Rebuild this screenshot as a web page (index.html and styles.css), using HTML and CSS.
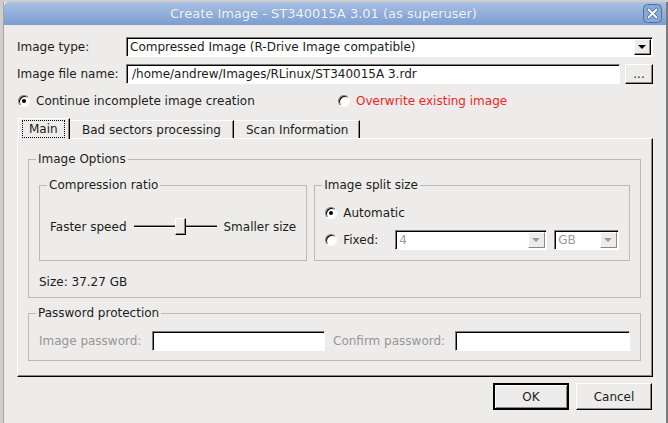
FILE: index.html
```html
<!DOCTYPE html>
<html lang="en">
<head>
    <meta charset="UTF-8">
    <title>Create Image</title>
    <link rel="stylesheet" href="styles.css">
</head>
<body>
<div class="desk">
    <div class="window">
        <!-- Title bar -->
        <div class="titlebar">
            <span class="title">Create Image - ST340015A 3.01 (as superuser)</span>
            <span class="close">
                <svg width="19" height="19" viewBox="0 0 19 19">
                    <rect x="0.5" y="0.5" width="18" height="18" rx="4" fill="#8aa9d8" stroke="#4f6f9f"/>
                    <path d="M5.5 5.5 L13.5 13.5 M13.5 5.5 L5.5 13.5" stroke="#4f6f9f" stroke-width="3.6" stroke-linecap="round"/>
                    <path d="M5.5 5.5 L13.5 13.5 M13.5 5.5 L5.5 13.5" stroke="#ffffff" stroke-width="1.8" stroke-linecap="round"/>
                </svg>
            </span>
        </div>

        <div class="content">
            <div class="form-row">
                <label class="row-label">Image type:</label>
                <div class="combo type-combo">
                    <span class="combo-text">Compressed Image (R-Drive Image compatible)</span>
                    <span class="drop"><i class="arrow"></i></span>
                </div>
            </div>

            <div class="form-row second">
                <label class="row-label">Image file name:</label>
                <div class="edit path">/home/andrew/Images/RLinux/ST340015A 3.rdr</div>
                <div class="btn browse">...</div>
            </div>

            <div class="radio-row">
                <span class="radio checked"></span>
                <span class="radio-text continue">Continue incomplete image creation</span>
                <span class="radio"></span>
                <span class="radio-text red">Overwrite existing image</span>
            </div>

            <!-- Tabs -->
            <div class="tabs">
                <div class="tab active"><span class="focus">Main</span></div>
                <div class="tab">Bad sectors processing</div>
                <div class="tab last">Scan Information</div>
            </div>

            <div class="panel">
                <fieldset class="group options">
                    <legend>Image Options</legend>
                    <div class="group-row">
                        <fieldset class="group compression">
                            <legend>Compression ratio</legend>
                            <div class="group-body slider-row">
                                <span>Faster speed</span>
                                <div class="slider"><span class="groove"></span><span class="handle"></span></div>
                                <span>Smaller size</span>
                            </div>
                        </fieldset>
                        <fieldset class="group split">
                            <legend>Image split size</legend>
                            <div class="group-body split-body">
                                <div class="split-line">
                                    <span class="radio checked"></span>
                                    <span class="radio-text">Automatic</span>
                                </div>
                                <div class="split-line fixed">
                                    <span class="radio"></span>
                                    <span class="radio-text fixed-text">Fixed:</span>
                                    <div class="combo disabled size-combo">
                                        <span class="combo-text">4</span>
                                        <span class="drop"><i class="arrow"></i></span>
                                    </div>
                                    <div class="combo disabled unit-combo">
                                        <span class="combo-text">GB</span>
                                        <span class="drop"><i class="arrow"></i></span>
                                    </div>
                                </div>
                            </div>
                        </fieldset>
                    </div>
                    <div class="size-text">Size: 37.27 GB</div>
                </fieldset>

                <fieldset class="group password">
                    <legend>Password protection</legend>
                    <div class="pw-row">
                        <span class="pw-label first">Image password:</span>
                        <div class="edit pw-edit first-edit"></div>
                        <span class="pw-label second">Confirm password:</span>
                        <div class="edit pw-edit second-edit"></div>
                    </div>
                </fieldset>
            </div>

            <div class="buttons">
                <div class="btn push default">OK</div>
                <div class="btn push">Cancel</div>
            </div>
        </div>
    </div>
</div>
</body>
</html>
```

FILE: styles.css
```css
* {
    box-sizing: border-box;
}
html {
    background: #cfcecc;
}
body {
    margin: 0;
    font-family: "DejaVu Sans", "Liberation Sans", sans-serif;
    font-size: 12px;
    color: #1c1c1c;
    white-space: nowrap;
}
.desk {
    height: 423px;
    padding: 2px 0 0 3px;
    overflow: hidden;
}
.window {
    width: 665px;
    height: 440px;
    background-color: #edecea;
    border-left: 1px solid #a4a4a4;
    border-right: 2px solid #7b7b7b;
}

/* title bar */
.titlebar {
    height: 23px;
    display: flex;
    align-items: center;
    background: linear-gradient(#a9c1e4, #7c9dd0);
    border-top-left-radius: 5px;
}
.title {
    flex: 1;
    text-align: center;
    color: #f3f6fb;
    font-size: 13px;
    text-shadow: 0 0 1px #6f8fc0;
}
.close {
    width: 19px;
    height: 19px;
    margin-right: 4px;
    display: flex;
}

.content {
    padding: 12px 13px 0 13px;
}

/* form rows */
.form-row {
    display: flex;
    align-items: center;
    height: 20px;
}
.form-row.second {
    margin-top: 7px;
}
.row-label {
    width: 109px;
}
.combo {
    display: flex;
    align-items: center;
    height: 20px;
    background: #fff;
    border: 1px solid;
    border-color: #7d7d7d #fff #fff #7d7d7d;
    box-shadow: inset 1px 1px 0 #000;
    padding: 0 1px 0 3px;
}
.type-combo {
    width: 527px;
}
.combo-text {
    flex: 1;
}
.drop {
    width: 17px;
    height: 16px;
    background: #edecea;
    border: 1px solid;
    border-color: #fff #000 #000 #fff;
    box-shadow: inset -1px -1px 0 #8a8a8a;
    display: flex;
    align-items: center;
    justify-content: center;
}
.arrow {
    width: 0;
    height: 0;
    border-left: 4px solid transparent;
    border-right: 4px solid transparent;
    border-top: 4px solid #000;
    margin-left: -1px;
}
.combo.disabled {
    color: #9a9a9a;
}
.combo.disabled .arrow {
    border-top-color: #9a9a9a;
}
.combo.disabled .drop {
    border-color: #fff #8a8a8a #8a8a8a #fff;
    box-shadow: none;
}
.edit {
    height: 20px;
    background: #fff;
    border: 1px solid;
    border-color: #7d7d7d #fff #fff #7d7d7d;
    box-shadow: inset 1px 1px 0 #000;
    padding: 2px 5px;
}
.path {
    width: 494px;
}
.btn {
    background: #edecea;
    border: 1px solid;
    border-color: #fff #000 #000 #fff;
    box-shadow: inset -1px -1px 0 #8a8a8a;
    display: flex;
    align-items: center;
    justify-content: center;
}
.browse {
    width: 28px;
    height: 20px;
    margin-left: 5px;
}

/* radios */
.radio-row {
    display: flex;
    align-items: center;
    height: 16px;
    margin-top: 9px;
    padding-left: 1px;
}
.radio {
    width: 12px;
    height: 12px;
    border-radius: 50%;
    border: 1px solid;
    border-color: #7d7d7d #fff #fff #7d7d7d;
    background: #fff;
    box-shadow: inset 1px 1px 0 #000;
    display: flex;
    align-items: center;
    justify-content: center;
    flex-shrink: 0;
}
.radio.checked::after {
    content: "";
    width: 4px;
    height: 4px;
    border-radius: 50%;
    background: #000;
}
.radio-text {
    margin-left: 6px;
}
.continue {
    width: 302px;
}
.red {
    color: #f51d1d;
}

/* tabs */
.tabs {
    display: flex;
    align-items: flex-end;
    height: 20px;
    margin-top: 9px;
    padding-left: 1px;
    position: relative;
    z-index: 1;
}
.tab {
    height: 18px;
    padding: 0 12px;
    border-top: 1px solid #fff;
    border-left: 1px solid #fff;
    border-right: 1px solid #000;
    box-shadow: inset -1px 0 0 #8a8a8a;
    display: flex;
    align-items: center;
}
.tab.last {
    padding: 0 11px 0 12px;
}
.tab.active {
    height: 21px;
    margin-bottom: -1px;
    padding: 0 3px 1px 3px;
    background: #edecea;
    width: 52px;
}
.focus {
    border: 1px dotted #000;
    padding: 1px 6px;
}
.tab + .tab {
    border-left: none;
}

/* main panel */
.panel {
    height: 239px;
    border: 1px solid;
    border-color: #fff #000 #000 #fff;
    box-shadow: inset -1px -1px 0 #8a8a8a;
    padding: 12px 11px 0 10px;
}
.group {
    margin: 0;
    border: 1px solid #bab9b7;
    padding: 0 10px;
}
.group legend {
    line-height: 16px;
    padding: 0 2px;
    margin-left: -3px;
}
.options {
    padding-top: 10px;
    padding-bottom: 7px;
}
.group-row {
    display: flex;
    gap: 7px;
}
.compression {
    width: 268px;
}
.split {
    flex: 1;
}
.group-body {
    height: 67px;
}
.slider-row {
    display: flex;
    align-items: center;
}
.slider {
    width: 83px;
    height: 17px;
    margin: 0 7px;
    position: relative;
    flex-shrink: 0;
}
.groove {
    position: absolute;
    left: 0;
    right: 0;
    top: 7px;
    height: 3px;
    border-top: 1px solid #8a8a8a;
    border-bottom: 1px solid #fff;
    background: #000;
}
.handle {
    position: absolute;
    left: 41px;
    top: 0;
    width: 11px;
    height: 17px;
    background: #edecea;
    border: 1px solid;
    border-color: #fff #000 #000 #fff;
    box-shadow: inset -1px -1px 0 #8a8a8a;
}
.split-body {
    padding-top: 12px;
}
.split-line {
    display: flex;
    align-items: center;
    height: 16px;
}
.split-line.fixed {
    height: 20px;
    margin-top: 9px;
}
.fixed-text {
    width: 52px;
}
.size-combo {
    width: 152px;
}
.unit-combo {
    width: 65px;
    margin-left: 7px;
}
.size-text {
    margin-top: 13px;
    line-height: 16px;
}
.password {
    margin-top: 7px;
    padding-top: 10px;
    padding-bottom: 9px;
}
.pw-row {
    display: flex;
    align-items: center;
    color: #969696;
}
.pw-label.first {
    width: 113px;
}
.pw-label.second {
    width: 122px;
    margin-left: 8px;
}
.first-edit {
    width: 173px;
}
.second-edit {
    width: 175px;
}

/* dialog buttons */
.buttons {
    display: flex;
    justify-content: flex-end;
    gap: 7px;
    margin-top: 6px;
    padding-right: 1px;
}
.push {
    width: 76px;
    height: 27px;
}
.push.default {
    border: 2px solid #000;
    box-shadow: inset 1px 1px 0 #fff, inset -1px -1px 0 #8a8a8a;
}
```
